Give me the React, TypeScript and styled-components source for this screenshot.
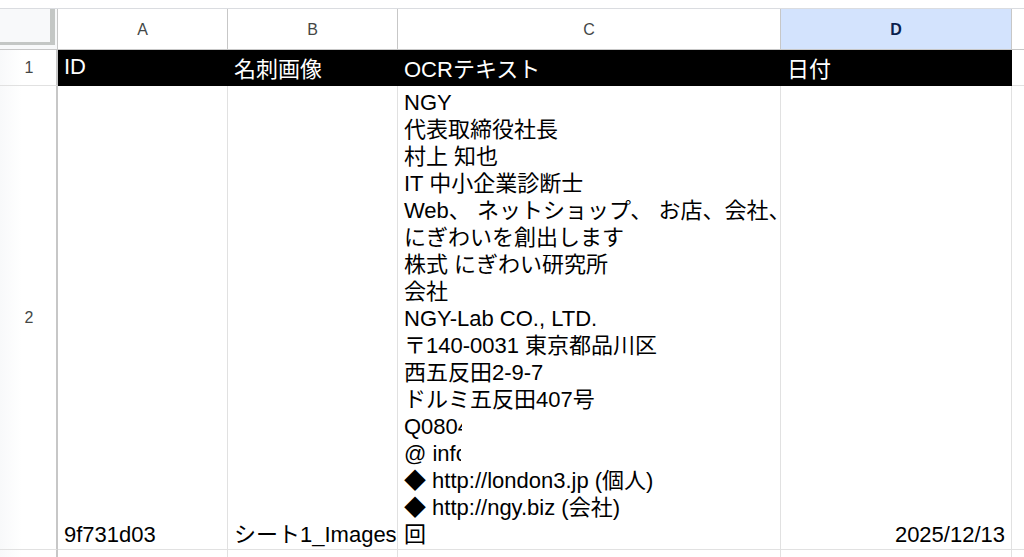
import { FC } from "react";
import styled, { createGlobalStyle } from "styled-components";

const GlobalStyle = createGlobalStyle`
  html, body {
    margin: 0;
    padding: 0;
    background: #fff;
    overflow: hidden;
  }
  body {
    font-family: "Liberation Sans", Arial, "Noto Sans CJK JP", sans-serif;
  }
`;

const columns = ["A", "B", "C", "D"];
const headers = ["ID", "名刺画像", "OCRテキスト", "日付"];

// OCR output as it sits in the cell; two lines are cut short in the sheet
const ocrLines: { text: string; clip?: number }[] = [
  { text: "NGY" },
  { text: "代表取締役社長" },
  { text: "村上 知也" },
  { text: "IT 中小企業診断士" },
  { text: "Web、 ネットショップ、 お店、会社、" },
  { text: "にぎわいを創出します" },
  { text: "株式 にぎわい研究所" },
  { text: "会社" },
  { text: "NGY-Lab CO., LTD." },
  { text: "〒140-0031 東京都品川区" },
  { text: "西五反田2-9-7" },
  { text: "ドルミ五反田407号" },
  { text: "Q0804", clip: 58 },
  { text: "@ info", clip: 57 },
  { text: "◆ http://london3.jp (個人)" },
  { text: "◆ http://ngy.biz (会社)" },
  { text: "回" },
];

const App: FC = () => {
  return (
    <>
      <GlobalStyle />
      <Sheet>
        <Corner>
          <CornerInner />
        </Corner>
        {columns.map((c) => (
          <ColHead key={c} $active={c === "D"}>
            {c}
          </ColHead>
        ))}
        <ColHead />

        <RowHead>1</RowHead>
        {headers.map((h) => (
          <HeadCell key={h}>{h}</HeadCell>
        ))}
        <Cell />

        <RowHead>2</RowHead>
        <Cell $bottom>9f731d03</Cell>
        <Cell $bottom $clip>
          シート1_Images
        </Cell>
        <Cell $bottom>
          <OcrText>
            {ocrLines.map((l, i) =>
              l.clip ? (
                <Line key={i}>
                  <Clipped style={{ width: l.clip }}>{l.text}</Clipped>
                </Line>
              ) : (
                <Line key={i}>{l.text}</Line>
              )
            )}
          </OcrText>
        </Cell>
        <Cell $bottom $right>
          2025/12/13
        </Cell>
        <Cell />

        <RowHead $short />
        <Cell $short />
        <Cell $short />
        <Cell $short />
        <Cell $short />
        <Cell $short />
      </Sheet>
    </>
  );
};

export default App;

const Sheet = styled.div`
  display: grid;
  grid-template-columns: 58px 170px 170px 383px 231px 1fr;
  grid-template-rows: 41px 36px 464px 20px;
  margin-top: 8px;
  border-top: 1px solid #dadce0;
  width: 1024px;
`;

const Corner = styled.div`
  background: #f8f9fa;
  border-right: 1px solid #c7c7c7;
  border-bottom: 1px solid #c7c7c7;
  position: relative;
`;

const CornerInner = styled.div`
  position: absolute;
  left: 0;
  top: 0;
  width: 50px;
  height: 33px;
  border-right: 5px solid #c4c7c5;
  border-bottom: 3px solid #c4c7c5;
  background: #f8f9fa;
`;

const ColHead = styled.div<{ $active?: boolean }>`
  display: flex;
  align-items: center;
  justify-content: center;
  background: ${(p) => (p.$active ? "#d3e3fd" : "#fff")};
  color: ${(p) => (p.$active ? "#0b1f4d" : "#444746")};
  font-weight: ${(p) => (p.$active ? 700 : 400)};
  font-size: 16px;
  border-right: 1px solid #c7c7c7;
  border-bottom: 1px solid #c7c7c7;
  padding-top: 2px;
`;

const RowHead = styled.div<{ $short?: boolean }>`
  display: flex;
  align-items: center;
  justify-content: center;
  background: linear-gradient(to right, #f8f9fa 0, #fff 22px);
  color: #444746;
  font-size: 16px;
  border-right: 2px solid #c7c7c7;
  border-bottom: 1px solid ${(p) => (p.$short ? "transparent" : "#e1e1e1")};
  padding-left: 2px;
`;

const HeadCell = styled.div`
  background: #000;
  color: #fff;
  font-size: 22px;
  display: flex;
  align-items: center;
  padding: 0 6px 2px;
  border-bottom: 1px solid #000;
  white-space: nowrap;
  overflow: hidden;
`;

const Cell = styled.div<{
  $bottom?: boolean;
  $right?: boolean;
  $clip?: boolean;
  $short?: boolean;
}>`
  display: flex;
  align-items: ${(p) => (p.$bottom ? "flex-end" : "center")};
  justify-content: ${(p) => (p.$right ? "flex-end" : "flex-start")};
  padding: 0 6px 1px 6px;
  padding-right: ${(p) => (p.$clip ? "0" : "6px")};
  font-size: 22px;
  line-height: 27px;
  color: #000;
  white-space: nowrap;
  overflow: hidden;
  border-right: 1px solid #e1e1e1;
  border-bottom: 1px solid ${(p) => (p.$short ? "transparent" : "#e1e1e1")};
`;

const OcrText = styled.div`
  display: flex;
  flex-direction: column;
`;

const Line = styled.div`
  font-size: 22px;
  line-height: 27px;
  height: 27px;
  white-space: nowrap;
`;

const Clipped = styled.span`
  display: inline-block;
  overflow: hidden;
  vertical-align: top;
`;
